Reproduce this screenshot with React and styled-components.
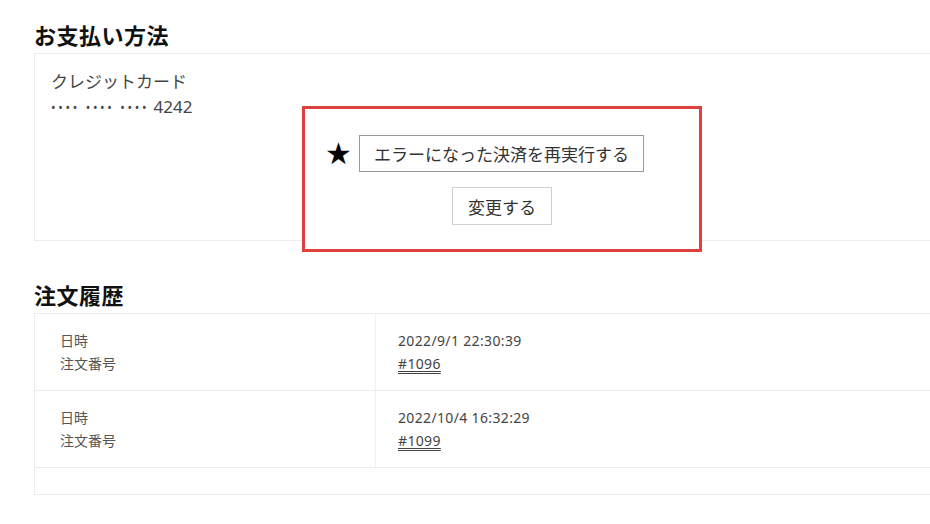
import React from "react"
import styled, { createGlobalStyle } from "styled-components"

const GlobalStyle = createGlobalStyle`
  body {
    margin: 0;
    background: #fff;
    font-family: "Noto Sans", "Noto Sans CJK JP", sans-serif;
    color: #333;
    overflow: hidden;
  }
`

// page wrapper, content runs past the right edge
const Page = styled.div`
  position: relative;
  width: 930px;
  height: 524px;
  overflow: hidden;
  padding: 21px 0 0 34px;
  box-sizing: border-box;
`

const Column = styled.div`
  width: 1000px;
`

const Heading = styled.h2`
  margin: 0 0 4px 0;
  font-size: 22px;
  line-height: 28px;
  font-weight: 700;
  letter-spacing: 0.5px;
  color: #111;
`

// payment method card
const Card = styled.div`
  border: 1px solid #ececec;
  height: 188px;
  box-sizing: border-box;
  padding: 15px 0 0 16px;
  margin-bottom: 40px;
`

const CardLine = styled.div`
  font-size: 17px;
  line-height: 25px;
  color: #444;
`

const Dots = styled.span`
  font-size: 12px;
  letter-spacing: 2.7px;
  vertical-align: 1px;
`

// order history table
const Table = styled.div`
  border: 1px solid #ececec;
  display: flex;
  flex-direction: column;
`

const Row = styled.div`
  display: grid;
  grid-template-columns: 340px 1fr;
  height: 77px;
  border-bottom: 1px solid #ececec;
  box-sizing: border-box;
`

const Cell = styled.div`
  display: flex;
  flex-direction: column;
  justify-content: center;
  padding-left: ${props => (props.label ? "25px" : "22px")};
  border-left: ${props => (props.label ? "none" : "1px solid #f0f0f0")};
  font-size: 14px;
  line-height: 23px;
  letter-spacing: ${props => (props.label ? "0" : "0.35px")};
  color: ${props => (props.label ? "#555" : "#444")};
`

const OrderLink = styled.a`
  color: #444;
  align-self: flex-start;
  text-decoration: underline double;
  text-underline-offset: 2px;
  text-decoration-thickness: 1px;
`

const TableFoot = styled.div`
  height: 26px;
`

// overlay with the highlighted buttons
const Overlay = styled.div`
  position: absolute;
  left: 302px;
  top: 106px;
  width: 400px;
  height: 146px;
  border: 3px solid #e0403c;
  box-sizing: border-box;
  background: #fff;
  display: flex;
  flex-direction: column;
  align-items: center;
  padding-top: 26px;
  gap: 15px;
`

const ActionRow = styled.div`
  display: flex;
  align-items: center;
  gap: 7px;
  margin-left: -35px;
`

const Star = styled.span`
  font-size: 30px;
  line-height: 1;
  color: #000;
  font-family: "DejaVu Sans", sans-serif;
`

const Button = styled.button`
  font-family: "Noto Sans", "Noto Sans CJK JP", sans-serif;
  font-size: 17px;
  color: #333;
  background: #fff;
  border: 1px solid ${props => (props.light ? "#cfcfcf" : "#999")};
  height: ${props => (props.light ? "38px" : "37px")};
  padding: 0 ${props => (props.light ? "15px" : "14px")};
`

const orders = [
  { date: "2022/9/1 22:30:39", id: "#1096" },
  { date: "2022/10/4 16:32:29", id: "#1099" },
]

export default function App() {
  return (
    <Page>
      <GlobalStyle />
      <Column>
        <Heading>お支払い方法</Heading>
        <Card>
          <CardLine>クレジットカード</CardLine>
          <CardLine>
            <Dots>•••• •••• ••••</Dots> 4242
          </CardLine>
        </Card>

        <Heading>注文履歴</Heading>
        <Table>
          {orders.map(o => (
            <Row key={o.id}>
              <Cell label>
                <span>日時</span>
                <span>注文番号</span>
              </Cell>
              <Cell>
                <span>{o.date}</span>
                <OrderLink href="#">{o.id}</OrderLink>
              </Cell>
            </Row>
          ))}
          <TableFoot />
        </Table>
      </Column>

      <Overlay>
        <ActionRow>
          <Star>★</Star>
          <Button>エラーになった決済を再実行する</Button>
        </ActionRow>
        <Button light>変更する</Button>
      </Overlay>
    </Page>
  )
}
